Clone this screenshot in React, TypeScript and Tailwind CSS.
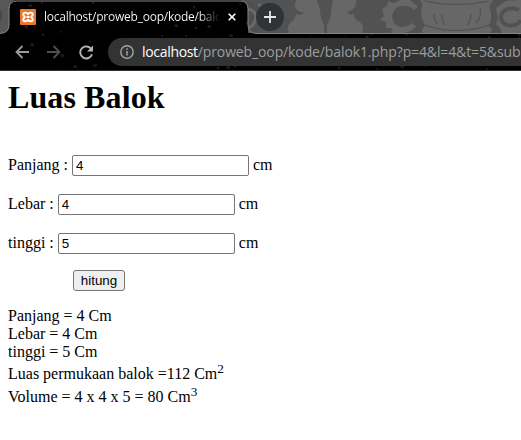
import React from "react";

const specks = Array.from({ length: 110 }, (_, i) => ({
  x: (i * 83 + ((i * i * 7) % 31)) % 521,
  y: (i * 37 + ((i * i * 5) % 17)) % 70,
  r: 0.8 + (i % 4) * 0.5,
}));

function Backdrop() {
  return (
    <svg className="absolute inset-0 -z-10" width="521" height="70" viewBox="0 0 521 70">
      <rect width="521" height="70" fill="#000" />
      {specks.map((s, i) => (
        <path key={i} d={`M${s.x - s.r} ${s.y}l${s.r} ${-s.r}l${s.r} ${s.r * 0.7}l${-s.r * 0.5} ${s.r}z`} fill="#1d1d1d" />
      ))}
      <path d="M0 0H16Q9 1 9 9V25Q9 33 0 33.5Z" fill="#575757" />
      <path d="M0 9Q5 15 0 22Z" fill="#484848" />
      <path d="M240 0H521V33.5H256Q248 33 248 25V9Q248 1 240 0Z" fill="#525252" />
      <g fill="#676767">
        <path d="M240 0H297Q293 4 296 9L300 12L305 12L300 15L296 14Q295 20 290 23Q286 27 289 33H324L324 25Q320 18 320 10L317 0H297Z" />
        <path d="M333 0H356Q357 6 352 10L347 12L351 15L354 14Q354 20 360 22Q365 27 362 33H327L327 25Q331 18 331 10Z" />
        <path d="M420 0H493Q487 6 491 12Q492 22 488 26Q495 29 490 33H423Q420 30 425 26Q421 18 421 10Q424 5 420 0Z" />
        <path d="M382 9L387 6L388 1L394 3L400 0H410L418 7L414 10Q405 3 396 8Q389 16 395 24L402 26L410 22L416 26L412 30L405 33H391L392 28L386 28L386 22L380 20L384 16Z" />
        <path d="M496 8L506 1L521 0V33H502L500 28L496 24L498 18Z" />
      </g>
      <path d="M240 0Q264 2 263 20Q262 27 257 33H248V4Z" fill="#505050" />
      <g fill="none" stroke="#696969" strokeWidth="3">
        <path d="M248 9Q258 11 255 21Q253 26 249 28M258 4Q266 9 266 23" />
      </g>
      <g fill="none" stroke="#525252" strokeWidth="1.2">
        <path d="M425 1Q456 8 489 1M424 25Q456 36 490 25M434 14Q434 21 438 24M442 14Q442 21 445 25M471 14Q471 21 467 25M480 8Q482 17 476 23" />
      </g>
      <g fill="none" stroke="#525252" strokeWidth="4">
        <path d="M412 12C406 4 392 9 395 19C398 28 410 26 411 19" />
        <path d="M519 10C507 5 498 13 502 21C506 28 519 26 520 20" />
      </g>
      <path d="M0 0H240Q248 1 248 9V25Q248 33.5 257 33.5H0Q9 33 9 25V9Q9 1 17 1H0Z" fill="none" />
      <path d="M0 33.5Q9 33 9 25V9Q9 1 17 1H240Q248 1 248 9V25Q248 33.5 257 33.5H521" fill="none" stroke="#858585" />
    </svg>
  );
}

function Favicon() {
  return (
    <svg className="shrink-0" width="16" height="16" viewBox="0 0 16 16">
      <rect width="16" height="16" rx="1" fill="#e8762c" />
      <path d="M8 5.3C7 3.1 3.2 3 3.2 5.4C3.2 6.8 4.8 7 4.8 8C4.8 9 3.2 9.2 3.2 10.6C3.2 13 7 12.9 8 10.7C9 12.9 12.8 13 12.8 10.6C12.8 9.2 11.2 9 11.2 8C11.2 7 12.8 6.8 12.8 5.4C12.8 3 9 3.1 8 5.3ZM6.5 8H9.5" fill="none" stroke="#fff" strokeWidth="1.9" strokeLinejoin="round" />
    </svg>
  );
}

function BrowserChrome() {
  return (
    <header className="relative isolate h-[71px] overflow-hidden border-b border-[#333234] font-['Open_Sans',sans-serif]">
      <Backdrop />
      <div className="flex h-[34px] items-center">
        <div className="flex h-full w-[248px] items-center pl-5">
          <Favicon />
          <div className="ml-2 w-[176px] overflow-hidden whitespace-nowrap bg-linear-to-r from-white from-88% to-transparent to-100% bg-clip-text text-[12px] leading-4 tracking-[-0.24px] text-transparent">
            localhost/proweb_oop/kode/balok1.php
          </div>
          <svg className="ml-2 shrink-0" width="8" height="8" viewBox="0 0 8 8"><path d="M.7.7L7.3 7.3M7.3.7L.7 7.3" stroke="#fff" strokeWidth="1.6" /></svg>
        </div>
        <div className="ml-2 flex size-7 items-center justify-center rounded-full bg-[#303335]">
          <svg width="12" height="12" viewBox="0 0 12 12"><path d="M6 0V12M0 6H12" stroke="#e5e5e5" strokeWidth="1.8" /></svg>
        </div>
      </div>
      <div className="flex h-9 items-center pl-[15px]">
        <svg className="shrink-0" width="14" height="14" viewBox="0 0 14 14"><path d="M14 7H1.5M7.5 1L1.5 7L7.5 13" fill="none" stroke="#9b9b9b" strokeWidth="1.8" /></svg>
        <svg className="ml-[18px] shrink-0" width="14" height="14" viewBox="0 0 14 14"><path d="M0 7H12.5M6.5 1L12.5 7L6.5 13" fill="none" stroke="#505050" strokeWidth="1.8" /></svg>
        <svg className="ml-[18px] shrink-0" width="15" height="15" viewBox="0 0 15 15"><path d="M12.2 4A6 6 0 1 0 13 9.2" fill="none" stroke="#b4b4b4" strokeWidth="1.9" /><path d="M14 .5V6.5H8Z" fill="#b4b4b4" /></svg>
        <div className="ml-[14px] flex h-7 flex-1 items-center overflow-hidden rounded-l-full bg-[#333333] pl-3 text-[14px] leading-5 whitespace-nowrap">
          <svg className="shrink-0" width="14" height="14" viewBox="0 0 14 14"><circle cx="7" cy="7" r="6.2" fill="none" stroke="#a1a4a8" strokeWidth="1.4" /><path d="M7 6V10.5M7 3.2V4.8" stroke="#a1a4a8" strokeWidth="1.5" /></svg>
          <span className="ml-2 tracking-[-0.32px] text-white">localhost</span>
          <span className="tracking-[-0.12px] text-[#9c9fa2]">/proweb_oop/kode/balok1.php?p=4&amp;l=4&amp;t=5&amp;sub</span>
        </div>
      </div>
    </header>
  );
}

function Field({ label, value }: { label: string; value: string }) {
  return (
    <label className="flex h-[21px] items-center gap-1">
      <span className="mb-px">{label} :</span>
      <input defaultValue={value} className="h-[21px] w-[177px] rounded-[2px] border border-[#767676] bg-white px-[3px] font-['Liberation_Sans',sans-serif] text-[13.333px] text-black" />
      <span className="mb-px">cm</span>
    </label>
  );
}

export default function App() {
  return (
    <div className="h-[440px] overflow-hidden bg-white text-black">
      <BrowserChrome />
      <main className="px-2 pt-2 font-['Liberation_Serif',serif] text-[16px] leading-[18px]">
        <h1 className="h-9 text-[32px] leading-9 font-bold tracking-[0.1px]">Luas Balok</h1>
        <form className="mt-10" onSubmit={(e) => e.preventDefault()}>
          <div className="flex flex-col gap-[18px]">
            <Field label="Panjang" value="4" />
            <Field label="Lebar" value="4" />
            <Field label="tinggi" value="5" />
          </div>
          <button className="mt-4 ml-[65px] block h-[21px] w-[52px] rounded-[3px] border border-[#767676] bg-[#efefef] font-['Liberation_Sans',sans-serif] text-[13.333px] leading-[19px]">hitung</button>
        </form>
        <section className="mt-4">
          <p>Panjang = 4 Cm</p>
          <p>Lebar = 4 Cm</p>
          <p>tinggi = 5 Cm</p>
          <p className="flex h-[22px] items-end">Luas permukaan balok =112 Cm<sup className="top-0 mb-[7px] text-[13.333px] leading-[15px]">2</sup></p>
          <p className="flex h-[23px] items-end">Volume = 4 x 4 x 5 = 80 Cm<sup className="top-0 mb-[7px] text-[13.333px] leading-[15px]">3</sup></p>
        </section>
      </main>
    </div>
  );
}
